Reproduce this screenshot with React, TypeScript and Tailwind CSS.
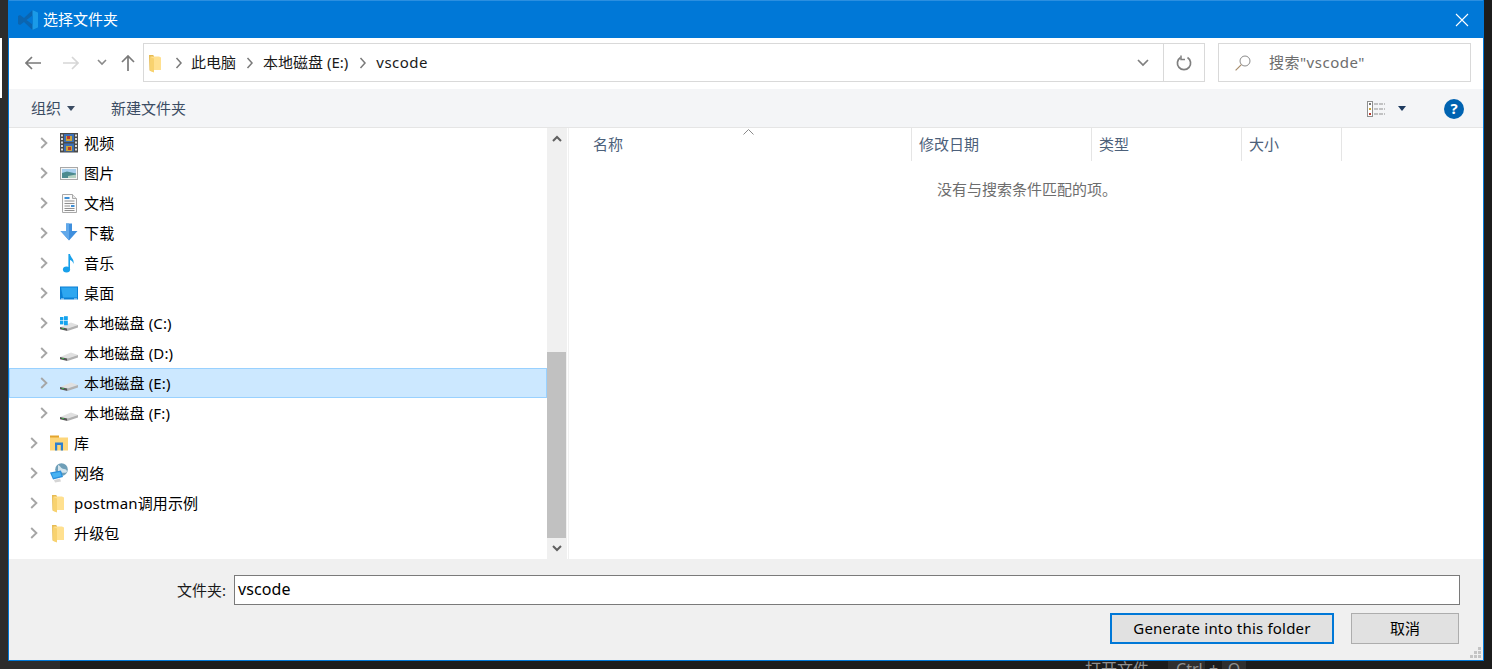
import React from "react";

const FONT = "font-['Noto_Sans','Noto_Sans_CJK_SC',sans-serif]";

function Chevron() {
  return (
    <svg width="8" height="12" viewBox="0 0 8 12" className="shrink-0">
      <path d="M1.2 1 L6.4 6 L1.2 11" fill="none" stroke="#a6a6a6" strokeWidth="1.9" />
    </svg>
  );
}

const Ico = ({ children }: { children: React.ReactNode }) => (
  <svg width="18" height="20" viewBox="0 0 18 20" className="shrink-0">
    {children}
  </svg>
);

const FilmIcon = () => (
  <Ico>
    <rect x="0" y="0" width="18" height="19.5" fill="#4a4a4a" />
    <rect x="4" y="1" width="10" height="8" fill="#3b6fb5" />
    <rect x="4" y="10.5" width="10" height="8" fill="#3b6fb5" />
    <rect x="6" y="3" width="6" height="5" fill="#c9a23a" />
    <rect x="7" y="3" width="3" height="3" fill="#b8392e" />
    <rect x="6" y="13" width="6" height="5" fill="#c9a23a" />
    <rect x="8" y="14" width="3" height="3" fill="#b8392e" />
    {[1.5, 5, 8.5, 12, 15.5].map((y) => (
      <g key={y}>
        <rect x="1" y={y} width="2" height="2" fill="#d8d8d8" />
        <rect x="15" y={y} width="2" height="2" fill="#d8d8d8" />
      </g>
    ))}
  </Ico>
);

const PictureIcon = () => (
  <Ico>
    <rect x="0.5" y="4.5" width="17" height="12" fill="#f6f6f6" stroke="#a8a8a8" />
    <rect x="2" y="6" width="14" height="5" fill="#a8cfee" />
    <path d="M2 10 L7 8.5 L16 10.5 V15 H2 Z" fill="#4c8a8f" />
    <path d="M8 13 L16 11.5 V15 H8 Z" fill="#b4d2c2" />
  </Ico>
);

const DocIcon = () => (
  <Ico>
    <path d="M2.5 1.5 H12.5 L16.5 5.5 V19.5 H2.5 Z" fill="#fbfbfb" stroke="#a8a8a8" />
    <path d="M12.5 1.5 V5.5 H16.5" fill="#e8e8e8" stroke="#a8a8a8" />
    <rect x="4.5" y="4" width="5" height="2" fill="#3d8fd6" />
    <path d="M4.5 8 H14.5 M4.5 10.5 H14.5 M4.5 13 H10 M4.5 15.5 H14.5 M4.5 17.5 H14.5" stroke="#8f8f8f" strokeWidth="1" />
    <rect x="11" y="12" width="3.5" height="2" fill="#3d8fd6" />
  </Ico>
);

const DownloadIcon = () => (
  <Ico>
    <path d="M5.5 0.5 H11.5 V8 H17 L8.5 17.5 L0 8 H5.5 Z" transform="translate(0.5 0)" fill="#3f8fdd" />
    <path d="M6 0.5 H9 V17 L0.5 8 H6 Z" fill="#62a9ea" />
  </Ico>
);

const MusicIcon = () => (
  <Ico>
    <ellipse cx="6.5" cy="16.5" rx="3.6" ry="2.9" fill="#18a0ea" />
    <path d="M8.4 1 H10 C10.5 4.5 14.5 6 13.5 11 C13 8.5 11.5 7.5 10 7 V16.5 H8.4 Z" fill="#18a0ea" />
  </Ico>
);

const DesktopIcon = () => (
  <Ico>
    <rect x="0" y="3.5" width="18" height="13" fill="#0b7fd4" />
    <path d="M1 4.5 H17 V14.5 H3 Z" fill="#2ea7f0" />
    <rect x="1" y="15.5" width="3" height="1" fill="#d7ecfb" />
    <rect x="14" y="15.5" width="3" height="1" fill="#d7ecfb" />
  </Ico>
);

const DriveIcon = ({ win }: { win?: boolean }) => (
  <Ico>
    <path d="M0 14 L11 9.5 L18 12 L7.5 15.5 Z" fill="#e0e0e0" />
    <path d="M0 14 V16.3 L7.5 18 V15.5 Z" fill="#555555" />
    <path d="M7.5 15.5 V18 L18 14.5 V12 Z" fill="#b0b0b0" />
    <rect x="2" y="15" width="2" height="1" fill="#3fb04a" />
    {win && (
      <g fill="#15a3ee">
        <rect x="0" y="4" width="3.4" height="3.4" />
        <rect x="4" y="3.2" width="3.8" height="4.2" />
        <rect x="0" y="8" width="3.4" height="3.4" />
        <rect x="4" y="8" width="3.8" height="4.2" />
      </g>
    )}
  </Ico>
);

const LibraryIcon = () => (
  <Ico>
    <rect x="0" y="2.5" width="9" height="3" fill="#e3a52e" />
    <rect x="0" y="4.5" width="18" height="13" fill="#fdd67a" />
    <path d="M5 17.5 V9.5 H13 V17.5 H10.8 V12 H7.2 V17.5 Z" fill="#2d7fd0" />
  </Ico>
);

const NetworkIcon = () => (
  <Ico>
    <circle cx="11.5" cy="6.5" r="6.3" fill="#6f9fb8" />
    <path d="M8 2 C11 3 11 6 14 6 C16 6 17 7 17 9 C14 11 11 9 8 8 Z" fill="#d4e4ec" />
    <path d="M0 9.5 L11 7.5 L13 14 L3 16.5 Z" fill="#2b8fdc" />
    <path d="M1.5 10.5 L10 9 L11.5 13 L3.5 15 Z" fill="#47b2f2" />
    <path d="M4 17 L10 15.5 L11 18.5 L5 19.5 Z" fill="#d5d5d5" />
  </Ico>
);

const FolderIcon = () => (
  <Ico>
    <path d="M2 2 H6 L7 3 V19 L2.5 17.5 Z" fill="#e6bb52" />
    <path d="M3.5 3.5 H12 L14 4.5 V17 H3.5 Z" fill="#ffe08f" />
    <path d="M3.2 4 L7 5.5 V19.5 L3.2 18 Z" fill="#f8d26f" />
  </Ico>
);

type RowT = { icon: React.ReactNode; label: string; level: 1 | 2; selected?: boolean };

const rows: RowT[] = [
  { icon: <FilmIcon />, label: "视频", level: 2 },
  { icon: <PictureIcon />, label: "图片", level: 2 },
  { icon: <DocIcon />, label: "文档", level: 2 },
  { icon: <DownloadIcon />, label: "下载", level: 2 },
  { icon: <MusicIcon />, label: "音乐", level: 2 },
  { icon: <DesktopIcon />, label: "桌面", level: 2 },
  { icon: <DriveIcon win />, label: "本地磁盘 (C:)", level: 2 },
  { icon: <DriveIcon />, label: "本地磁盘 (D:)", level: 2 },
  { icon: <DriveIcon />, label: "本地磁盘 (E:)", level: 2, selected: true },
  { icon: <DriveIcon />, label: "本地磁盘 (F:)", level: 2 },
  { icon: <LibraryIcon />, label: "库", level: 1 },
  { icon: <NetworkIcon />, label: "网络", level: 1 },
  { icon: <FolderIcon />, label: "postman调用示例", level: 1 },
  { icon: <FolderIcon />, label: "升级包", level: 1 },
];

function TreeRow({ r }: { r: RowT }) {
  return (
    <div
      className={
        "flex items-center h-[30px] border " +
        (r.level === 2 ? "pl-[30px] " : "pl-[20px] ") +
        (r.selected ? "bg-[#cce8ff] border-[#99d1ff]" : "border-transparent")
      }
    >
      <Chevron />
      <span className="w-[12px] shrink-0" />
      {r.icon}
      <span className="ml-[6px] text-[15px] leading-[20px] text-black whitespace-nowrap tracking-[0.15px]">{r.label}</span>
    </div>
  );
}

const Sep = () => (
  <svg width="8" height="12" viewBox="0 0 8 12" className="shrink-0">
    <path d="M1.5 1 L6 6 L1.5 11" fill="none" stroke="#7a7a7a" strokeWidth="1.5" />
  </svg>
);

const Caret = ({ color }: { color: string }) => (
  <svg width="8" height="5" viewBox="0 0 8 5" className="shrink-0">
    <path d="M0 0 H8 L4 5 Z" fill={color} />
  </svg>
);

function HeaderCol({ label, w }: { label: string; w: string }) {
  return (
    <div className={"h-[33px] flex items-center pl-[7px] border-r border-[#e5e5e5] text-[15px] text-[#4c607a] " + w}>
      {label}
    </div>
  );
}

export default function App() {
  return (
    <div className={"w-[1492px] h-[669px] overflow-hidden bg-[#1c1c1c] flex flex-col " + FONT}>
      <div className="flex h-[661px] shrink-0">
        <div className="w-[8px] shrink-0 bg-[#2c2c2c] pt-[38px]">
          <div className="w-[2px] h-[60px] bg-white" />
        </div>
        <div className="w-[1476px] shrink-0 flex flex-col border-x border-b border-[#0078d7] bg-white">
          {/* Title bar */}
          <div className="h-[38px] shrink-0 bg-[#0078d7] border-t border-[#2b8fe0] flex items-center pl-[9px] pr-[14px]">
            <svg width="20" height="20" viewBox="0 0 20 20" className="shrink-0">
              <path d="M14.5 0 L20 2.5 V17.5 L14.5 20 L6 12 L2 15 L0 14 V6 L2 5 L6 8 Z" fill="#0b65b0" />
              <path d="M14.5 0 L20 2.5 V17.5 L14.5 20 Z" fill="#1a9be8" />
              <path d="M14.5 5.5 V14.5 L8.5 10 Z" fill="#0078d7" />
            </svg>
            <span className="ml-[5px] text-[15px] text-white">选择文件夹</span>
            <svg width="14" height="14" viewBox="0 0 14 14" className="ml-auto shrink-0">
              <path d="M1 1 L13 13 M13 1 L1 13" stroke="#fff" strokeWidth="1.1" />
            </svg>
          </div>

          {/* Address row */}
          <div className="h-[51px] shrink-0 flex items-center bg-white pl-[16px] pr-[12px] pb-[2px]">
            <svg width="16" height="14" viewBox="0 0 16 14" className="shrink-0">
              <path d="M1 7 H16 M7 1 L1 7 L7 13" fill="none" stroke="#7a7a7a" strokeWidth="1.7" />
            </svg>
            <svg width="16" height="14" viewBox="0 0 16 14" className="ml-[22px] shrink-0">
              <path d="M0 7 H15 M9 1 L15 7 L9 13" fill="none" stroke="#d6d6d6" strokeWidth="1.7" />
            </svg>
            <svg width="10" height="7" viewBox="0 0 10 7" className="ml-[18px] shrink-0">
              <path d="M1 1 L5 5 L9 1" fill="none" stroke="#8a8a8a" strokeWidth="1.6" />
            </svg>
            <svg width="14" height="16" viewBox="0 0 14 16" className="ml-[14px] shrink-0">
              <path d="M7 16 V1 M1 7 L7 1 L13 7" fill="none" stroke="#7a7a7a" strokeWidth="1.7" />
            </svg>
            <div className="ml-[8px] w-[1062px] h-[39px] shrink-0 flex items-center border border-[#d9d9d9] pl-[3px]">
              <FolderIcon />
              <span className="w-[6px]" />
              <div className="ml-[4px]"><Sep /></div>
              <span className="ml-[8px] text-[15px] text-[#1a1a1a]">此电脑</span>
              <div className="ml-[10px]"><Sep /></div>
              <span className="ml-[9px] text-[15px] text-[#1a1a1a] whitespace-nowrap">本地磁盘 (E:)</span>
              <div className="ml-[11px]"><Sep /></div>
              <span className="ml-[9px] text-[15px] text-[#1a1a1a] tracking-[0.5px]">vscode</span>
              <svg width="12" height="8" viewBox="0 0 12 8" className="ml-auto mr-[14px] shrink-0">
                <path d="M1 1 L6 6 L11 1" fill="none" stroke="#7f7f7f" strokeWidth="1.7" />
              </svg>
              <div className="w-[41px] h-full border-l border-[#d9d9d9] flex items-center justify-center shrink-0">
                <svg width="16" height="16" viewBox="0 0 16 16">
                  <path d="M11.5 2.5 A6.6 6.6 0 1 1 4.5 2.5" fill="none" stroke="#7f7f7f" strokeWidth="1.7" />
                  <path d="M10 0.5 V4.5 H14" fill="none" stroke="#7f7f7f" strokeWidth="1.5" transform="translate(-5 0)" />
                </svg>
              </div>
            </div>
            <div className="ml-[13px] flex-1 h-[39px] flex items-center border border-[#d9d9d9] pl-[16px]">
              <svg width="16" height="16" viewBox="0 0 16 16" className="shrink-0">
                <circle cx="10" cy="6" r="5" fill="none" stroke="#8a8a8a" strokeWidth="1" />
                <path d="M6.4 9.6 L0.6 15.4" stroke="#a68a6a" strokeWidth="1.2" />
              </svg>
              <span className="ml-[18px] text-[15px] text-[#6d6d6d] tracking-[0.5px]">搜索"vscode"</span>
            </div>
          </div>

          {/* Toolbar */}
          <div className="h-[39px] shrink-0 bg-[#f4f5f7] border-b border-[#e5e5e5] flex items-center pl-[22px] pr-[19px] pt-px text-[15px] text-[#3b4c63]">
            <span>组织</span>
            <span className="ml-[6px]"><Caret color="#3b4c63" /></span>
            <span className="ml-[36px]">新建文件夹</span>
            <svg width="18" height="16" viewBox="0 0 18 16" className="ml-auto shrink-0">
              <rect x="0.5" y="0.5" width="5" height="15" fill="#fff" stroke="#8f8f8f" />
              <rect x="2" y="2" width="2" height="2" fill="#777" />
              <rect x="2" y="7" width="2" height="2" fill="#c9a23a" />
              <rect x="2" y="12" width="2" height="2" fill="#b8392e" />
              <path d="M7 3 H18 M7 8 H18 M7 13 H18" stroke="#8f8f8f" strokeWidth="1" strokeDasharray="4 1" />
            </svg>
            <span className="ml-[13px]"><Caret color="#1e3a5f" /></span>
            <span className="ml-[38px] w-[20px] h-[20px] rounded-full bg-[#0063b1] text-white text-[15px] font-bold flex items-center justify-center leading-none">?</span>
          </div>

          {/* Main content */}
          <div className="h-[431px] shrink-0 flex bg-white">
            <div className="w-[538px] shrink-0">
              {rows.map((r) => (
                <TreeRow key={r.label} r={r} />
              ))}
            </div>
            <div className="w-[20px] shrink-0 bg-[#f0f0f0] flex flex-col">
              <div className="h-[21px] flex items-center justify-center pr-px">
                <svg width="10" height="7" viewBox="0 0 10 7">
                  <path d="M1 6 L5 2 L9 6" fill="none" stroke="#606060" strokeWidth="2" />
                </svg>
              </div>
              <div className="h-[203px]" />
              <div className="h-[186px] w-[19px] bg-[#c1c1c1]" />
              <div className="h-[21px] flex items-center justify-center pr-px">
                <svg width="10" height="7" viewBox="0 0 10 7">
                  <path d="M1 1 L5 5 L9 1" fill="none" stroke="#606060" strokeWidth="2" />
                </svg>
              </div>
            </div>
            <div className="w-[2px] shrink-0 bg-white border-r border-[#f0f0f0]" />
            <div className="flex-1 flex flex-col relative">
              <svg width="11" height="6" viewBox="0 0 11 6" className="absolute left-[174px] top-[1px]">
                <path d="M0.5 5.5 L5.5 0.5 L10.5 5.5" fill="none" stroke="#8a8a8a" strokeWidth="1" />
              </svg>
              <div className="flex pl-[17px]">
                <HeaderCol label="名称" w="w-[326px]" />
                <HeaderCol label="修改日期" w="w-[180px]" />
                <HeaderCol label="类型" w="w-[150px]" />
                <HeaderCol label="大小" w="w-[100px]" />
              </div>
              <div className="mt-[17px] text-center text-[15px] leading-[22px] text-[#6d6d6d] pl-[2px]">没有与搜索条件匹配的项。</div>
            </div>
          </div>

          {/* Footer form */}
          <div className="flex-1 bg-[#f0f0f0] flex flex-col items-end pr-[23px] pt-[16px] relative">
            <div className="flex items-center">
              <span className="text-[15px] text-[#1a1a1a] mr-[8px]">文件夹:</span>
              <div className="w-[1226px] h-[30px] bg-white border border-[#7a7a7a] flex items-center pl-[3px] pb-[2px] text-[16px] text-black tracking-[0.1px]">vscode</div>
            </div>
            <div className="flex mt-[8px] gap-[17px] pr-px">
              <div className="w-[224px] h-[31px] bg-[#e1e1e1] border-2 border-[#0078d7] flex items-center justify-center text-[15px] text-black tracking-[0.2px]">Generate into this folder</div>
              <div className="w-[108px] h-[31px] bg-[#e1e1e1] border border-[#adadad] flex items-center justify-center text-[15px] text-black">取消</div>
            </div>
            <svg width="12" height="12" viewBox="0 0 12 12" className="absolute right-[2px] bottom-[1px]">
              {[[9, 0], [5, 4], [9, 4], [1, 8], [5, 8], [9, 8]].map(([x, y]) => (
                <rect key={x + "-" + y} x={x} y={y} width="3" height="3" fill="#c4c4c4" />
              ))}
            </svg>
          </div>
        </div>
        <div className="flex-1 bg-[#1c1c1c]" />
      </div>
      {/* Editor behind the dialog, clipped by the page edge */}
      <div className="flex-1 flex overflow-hidden">
        <div className="w-[60px] bg-[#2c2c2c] shrink-0" />
        <div className="ml-[1025px] flex items-start -mt-[2px] text-[16px] leading-[20px] text-[#8f8f8f]">
          <span className="whitespace-nowrap">打开文件</span>
          <span className="ml-[19px] w-[37px] pl-[8px] h-[20px] bg-[#2f2f2f]">Ctrl</span>
          <span className="w-[17px] text-center">+</span>
          <span className="w-[24px] text-center h-[20px] bg-[#2f2f2f]">O</span>
        </div>
      </div>
    </div>
  );
}
